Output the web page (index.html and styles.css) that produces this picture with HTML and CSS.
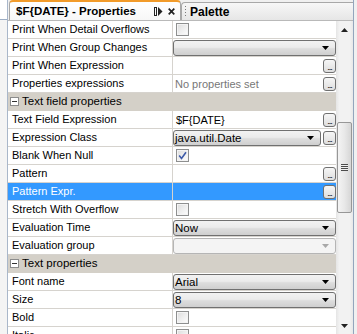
FILE: index.html
```html
<!DOCTYPE html>
<html>
<head>
<meta charset="utf-8">
<link rel="stylesheet" href="styles.css">
</head>
<body>
<div class="window">
  <div class="gutter"><div class="gutter-box"></div></div>
  <div class="panel">
    <div class="tabbar">
      <div class="tab tab-active">
        <span class="tab-title">$F{DATE} - Properties</span>
        <span class="tab-icons">
          <svg class="ico-max" width="9" height="9" viewBox="0 0 9 9"><rect x="0.5" y="0.5" width="2" height="8" fill="none" stroke="#222"/><path d="M4 0 L8.5 4.5 L4 9 Z" fill="#222"/></svg>
          <svg class="ico-close" width="7" height="7" viewBox="0 0 7 7"><path d="M0.7 0.7 L6.3 6.3 M6.3 0.7 L0.7 6.3" stroke="#222" stroke-width="1.7"/></svg>
        </span>
      </div>
      <div class="tab tab-palette">
        <span class="grip"></span>
        <span class="tab-title">Palette</span>
      </div>
    </div>
    <div class="content">
      <div class="sheet">
        <div class="row"><div class="label">Print When Detail Overflows</div><div class="value"><span class="check"></span></div></div>
        <div class="row"><div class="label">Print When Group Changes</div><div class="value"><div class="combo"><span class="combo-text"></span><svg class="arrow" width="7" height="4" viewBox="0 0 7 4"><path d="M0 0H7L3.5 4Z" fill="#000"/></svg></div></div></div>
        <div class="row"><div class="label">Print When Expression</div><div class="value"><span class="dots">...</span></div></div>
        <div class="row"><div class="label">Properties expressions</div><div class="value"><span class="muted">No properties set</span><span class="dots">...</span></div></div>
        <div class="section"><span class="minus"></span>Text field properties</div>
        <div class="row"><div class="label">Text Field Expression</div><div class="value"><span class="text">$F{DATE}</span><span class="dots">...</span></div></div>
        <div class="row"><div class="label">Expression Class</div><div class="value"><div class="combo"><span class="combo-text">java.util.Date</span><svg class="arrow" width="7" height="4" viewBox="0 0 7 4"><path d="M0 0H7L3.5 4Z" fill="#000"/></svg></div><span class="dots">...</span></div></div>
        <div class="row"><div class="label">Blank When Null</div><div class="value"><span class="check"><svg width="9" height="9" viewBox="0 0 9 9"><path d="M1.2 4.6 L3.5 7.4 L8 1.2" stroke="#3d5aa8" stroke-width="1.6" fill="none"/></svg></span></div></div>
        <div class="row"><div class="label">Pattern</div><div class="value"><span class="dots">...</span></div></div>
        <div class="row selected"><div class="label">Pattern Expr.</div><div class="value"><span class="dots">...</span></div></div>
        <div class="row"><div class="label">Stretch With Overflow</div><div class="value"><span class="check"></span></div></div>
        <div class="row"><div class="label">Evaluation Time</div><div class="value"><div class="combo"><span class="combo-text">Now</span><svg class="arrow" width="7" height="4" viewBox="0 0 7 4"><path d="M0 0H7L3.5 4Z" fill="#000"/></svg></div></div></div>
        <div class="row"><div class="label">Evaluation group</div><div class="value"><div class="combo disabled"><span class="combo-text"></span><svg class="arrow" width="7" height="4" viewBox="0 0 7 4"><path d="M0 0H7L3.5 4Z" fill="#a8a8a8"/></svg></div></div></div>
        <div class="section"><span class="minus"></span>Text properties</div>
        <div class="row"><div class="label">Font name</div><div class="value"><div class="combo"><span class="combo-text">Arial</span><svg class="arrow" width="7" height="4" viewBox="0 0 7 4"><path d="M0 0H7L3.5 4Z" fill="#000"/></svg></div></div></div>
        <div class="row"><div class="label">Size</div><div class="value"><div class="combo"><span class="combo-text">8</span><svg class="arrow" width="7" height="4" viewBox="0 0 7 4"><path d="M0 0H7L3.5 4Z" fill="#000"/></svg></div></div></div>
        <div class="row"><div class="label">Bold</div><div class="value"><span class="check"></span></div></div>
        <div class="row"><div class="label">Italic</div><div class="value"><span class="check"></span></div></div>
      </div>
      <div class="vscroll">
        <div class="sb-btn"><svg width="7" height="4" viewBox="0 0 7 4"><path d="M0 4H7L3.5 0Z" fill="#222"/></svg></div>
        <div class="sb-track">
          <div class="sb-thumb"><span class="grip-lines"></span></div>
        </div>
        <div class="sb-btn"><svg width="7" height="4" viewBox="0 0 7 4"><path d="M0 0H7L3.5 4Z" fill="#222"/></svg></div>
      </div>
    </div>
  </div>
  <div class="edge"></div>
</div>
</body>
</html>
```
FILE: styles.css
```css
html, body {
  margin: 0;
  padding: 0;
  width: 357px;
  height: 334px;
  overflow: hidden;
  background: #ffffff;
  font-family: "Liberation Sans", Arial, sans-serif;
  font-size: 11px;
  color: #000;
}

.window {
  display: flex;
  height: 334px;
}

.gutter {
  width: 7px;
  border-right: 1px solid #a9b7ca;
  background: #f4f4f4;
  flex: none;
}

.gutter-box {
  height: 19px;
  background: #ffffff;
  border-bottom: 1px solid #9cadc4;
}

.panel {
  width: 345px;
  flex: none;
  display: flex;
  flex-direction: column;
}

.edge {
  width: 3px;
  flex: none;
  border-left: 1px solid #93a5bd;
  background: #f0f0f0;
}

/* tabs */
.tabbar {
  height: 20px;
  display: flex;
  align-items: flex-end;
  border-bottom: 1px solid #b9b9b9;
  background: #f0f0f0;
  flex: none;
}

.tab {
  box-sizing: border-box;
  display: flex;
  align-items: center;
  font-weight: bold;
  font-size: 11.5px;
  white-space: nowrap;
}

.tab-active {
  margin-left: 1px;
  width: 172px;
  height: 20px;
  border: 1px solid #a8a8a8;
  border-top: 2px solid #f29b2a;
  border-bottom: none;
  border-radius: 4px 4px 0 0;
  background: linear-gradient(#ffffff, #f7f7f7);
  padding-left: 6px;
}

.tab-active .tab-title {
  flex: 1;
}

.tab-icons {
  display: flex;
  align-items: center;
  gap: 5px;
  padding-right: 5px;
}

.tab-palette {
  flex: 1;
  height: 18px;
  border: 1px solid #a8a8a8;
  border-bottom: none;
  border-right: none;
  border-radius: 4px 0 0 0;
  background: linear-gradient(#f7f7f7, #e6e6e6);
  padding-left: 3px;
  font-size: 12px;
}

.grip {
  width: 1px;
  height: 12px;
  margin-right: 4px;
  background: repeating-linear-gradient(#7a7a7a 0 1px, transparent 1px 3px);
}

/* content */
.content {
  flex: 1;
  display: flex;
  overflow: hidden;
}

.sheet {
  width: 328px;
  flex: none;
}

.row {
  display: grid;
  grid-template-columns: 165px 163px;
  height: 17px;
  border-bottom: 1px solid #d6d3ce;
}

.label {
  box-sizing: border-box;
  border-right: 1px solid #d6d3ce;
  padding-left: 4px;
  line-height: 17px;
  white-space: nowrap;
  overflow: hidden;
}

.value {
  display: flex;
  align-items: center;
  gap: 2px;
  min-width: 0;
}

.selected {
  background: #3399ff;
}

.selected .label {
  color: #ffffff;
}

.section {
  height: 17px;
  border-bottom: 1px solid #d4d0c8;
  background: #d4d0c8;
  display: flex;
  align-items: center;
  line-height: 17px;
  font-size: 11.5px;
}

.minus {
  box-sizing: border-box;
  width: 9px;
  height: 9px;
  margin: 0 3px 0 2px;
  border: 1px solid #8c8c8c;
  background: #ffffff;
  position: relative;
}

.minus::after {
  content: "";
  position: absolute;
  left: 1px;
  right: 1px;
  top: 3px;
  height: 1px;
  background: #333;
}

.check {
  box-sizing: border-box;
  width: 13px;
  height: 13px;
  margin-left: 3px;
  border: 1px solid #8e8f8f;
  background: linear-gradient(135deg, #dcdcdc, #ffffff);
  box-shadow: inset 0 0 0 1px #f4f4f4;
  display: flex;
  align-items: center;
  justify-content: center;
}

.dots {
  box-sizing: border-box;
  width: 13px;
  height: 14px;
  margin-left: auto;
  border: 1px solid #707070;
  border-radius: 3px;
  background: linear-gradient(#f6f6f6, #dedede);
  font-size: 9px;
  line-height: 15px;
  text-align: center;
  letter-spacing: -1px;
  color: #000;
  flex: none;
}

.text {
  padding-left: 3px;
}

.muted {
  padding-left: 2px;
  color: #777777;
}

.combo {
  box-sizing: border-box;
  flex: 1;
  height: 16px;
  min-width: 0;
  display: flex;
  align-items: center;
  border: 1px solid #707070;
  border-radius: 3px;
  background: linear-gradient(#f2f2f2 0%, #ebebeb 45%, #dddddd 55%, #cfcfcf 100%);
  padding-left: 1px;
  padding-right: 6px;
}

.combo-text {
  flex: 1;
  font-size: 11.5px;
}

.combo.disabled {
  border-color: #b5b5b5;
  background: #f4f4f4;
}

/* scrollbar */
.vscroll {
  width: 17px;
  flex: none;
  display: flex;
  flex-direction: column;
  background: linear-gradient(to right, #e5e5e5, #f2f2f2 20%, #f2f2f2 80%, #e8e8e8);
}

.sb-btn {
  height: 17px;
  flex: none;
  display: flex;
  align-items: center;
  justify-content: center;
}

.sb-track {
  flex: 1;
  display: flex;
  flex-direction: column;
  align-items: center;
}

.sb-thumb {
  box-sizing: border-box;
  margin-top: 84px;
  width: 15px;
  height: 91px;
  border: 1px solid #979797;
  border-radius: 2px;
  background: linear-gradient(to right, #f4f4f4, #e8e8e8 50%, #d6d6d6);
  display: flex;
  align-items: center;
  justify-content: center;
}

.grip-lines {
  width: 7px;
  height: 7px;
  background: repeating-linear-gradient(#4c4c4c 0 1px, #f0f0f0 1px 2px);
}
```
